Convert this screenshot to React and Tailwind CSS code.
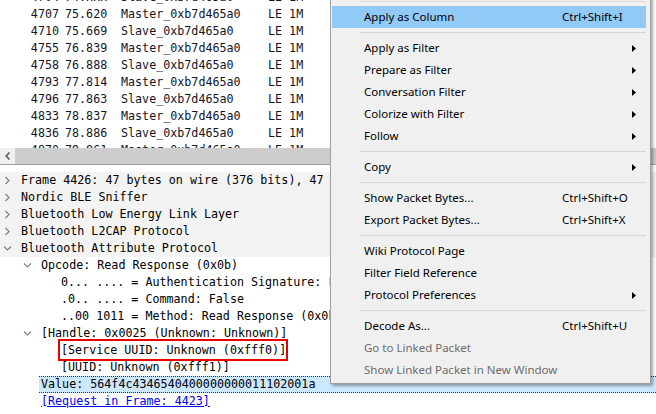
import React from 'react';

const packets = [
  ['4704', '74.xxx', 'Slave_0xb7d465a0'],
  ['4707', '75.620', 'Master_0xb7d465a0'],
  ['4710', '75.669', 'Slave_0xb7d465a0'],
  ['4755', '76.839', 'Master_0xb7d465a0'],
  ['4758', '76.888', 'Slave_0xb7d465a0'],
  ['4793', '77.814', 'Master_0xb7d465a0'],
  ['4796', '77.863', 'Slave_0xb7d465a0'],
  ['4833', '78.837', 'Master_0xb7d465a0'],
  ['4836', '78.886', 'Slave_0xb7d465a0'],
  ['4870', '79.861', 'Master_0xb7d465a0'],
];

const menu = [
  { sep: true },
  { label: 'Apply as Column', sc: 'Ctrl+Shift+I', hl: true },
  { sep: true },
  { label: 'Apply as Filter', sub: true },
  { label: 'Prepare as Filter', sub: true },
  { label: 'Conversation Filter', sub: true },
  { label: 'Colorize with Filter', sub: true },
  { label: 'Follow', sub: true },
  { sep: true },
  { label: 'Copy', sub: true },
  { sep: true },
  { label: 'Show Packet Bytes...', sc: 'Ctrl+Shift+O' },
  { label: 'Export Packet Bytes...', sc: 'Ctrl+Shift+X' },
  { sep: true },
  { label: 'Wiki Protocol Page' },
  { label: 'Filter Field Reference' },
  { label: 'Protocol Preferences', sub: true },
  { sep: true },
  { label: 'Decode As...', sc: 'Ctrl+Shift+U' },
  { label: 'Go to Linked Packet', off: true },
  { label: 'Show Linked Packet in New Window', off: true },
];

// tree expander chevron
const Arrow = ({ open }) => (
  <svg width="9" height="9" viewBox="0 0 9 9" className="block">
    {open ? (
      <polyline points="1,2.5 4.5,6 8,2.5" fill="none" stroke="#808080" strokeWidth="1.2" />
    ) : (
      <polyline points="2.5,1 6,4.5 2.5,8" fill="none" stroke="#808080" strokeWidth="1.2" />
    )}
  </svg>
);

const TreeRow = ({ level, arrow, children, top }) => (
  <div className={`h-[17px] flex items-center whitespace-nowrap ${top ? 'bg-[#f3f3f3]' : ''}`}>
    <div style={{ width: level * 20 }} className="shrink-0" />
    <div className="w-[21px] shrink-0 pl-[3px]">{arrow && <Arrow open={arrow === 'open'} />}</div>
    {children}
  </div>
);

export default function App() {
  return (
    <div className="relative w-[656px] h-[414px] overflow-hidden bg-white text-[11.7px] text-black font-['DejaVu_Sans_Mono',monospace]">
      {/* Packet list */}
      <div className="h-[148px] overflow-hidden">
        <div className="-mt-[11px]">
          {packets.map(([no, time, src]) => (
            <div key={no} className="h-[17px] flex items-center whitespace-nowrap text-[#15151f]">
              <span className="w-[59px] text-right shrink-0">{no}</span>
              <span className="w-[56px] ml-[6px] shrink-0">{time}</span>
              <span className="w-[147px] shrink-0">{src}</span>
              <span>LE 1M</span>
            </div>
          ))}
        </div>
      </div>

      {/* Horizontal scrollbar */}
      <div className="h-[16px] flex">
        <div className="w-[15px] bg-[#f0f0f0] flex items-center justify-center">
          <svg width="6" height="8" viewBox="0 0 6 8">
            <polyline points="4.5,0.5 1.2,4 4.5,7.5" fill="none" stroke="#606060" strokeWidth="1.6" />
          </svg>
        </div>
        <div className="flex-1 bg-[#cdcdcd]" />
      </div>
      <div className="h-px bg-[#a0a0a0]" />

      {/* Packet details */}
      <div className="pt-[7px]">
        <TreeRow level={0} arrow="closed" top>Frame 4426: 47 bytes on wire (376 bits), 47 bytes captured (376 bits) on interface 0</TreeRow>
        <TreeRow level={0} arrow="closed" top>Nordic BLE Sniffer</TreeRow>
        <TreeRow level={0} arrow="closed" top>Bluetooth Low Energy Link Layer</TreeRow>
        <TreeRow level={0} arrow="closed" top>Bluetooth L2CAP Protocol</TreeRow>
        <TreeRow level={0} arrow="open" top>Bluetooth Attribute Protocol</TreeRow>
        <TreeRow level={1} arrow="open">Opcode: Read Response (0x0b)</TreeRow>
        <TreeRow level={2}>0... .... = Authentication Signature: False</TreeRow>
        <TreeRow level={2}>.0.. .... = Command: False</TreeRow>
        <TreeRow level={2}>..00 1011 = Method: Read Response (0x0b)</TreeRow>
        <TreeRow level={1} arrow="open">[Handle: 0x0025 (Unknown: Unknown)]</TreeRow>
        <TreeRow level={2}>
          <span className="relative">
            [Service UUID: Unknown (0xfff0)]
            <span className="absolute left-[-3px] right-[-2px] top-[-3px] bottom-[-2px] border-2 border-[#e80000]" />
          </span>
        </TreeRow>
        <TreeRow level={2}>[UUID: Unknown (0xfff1)]</TreeRow>
        <div className="h-[17px] flex whitespace-nowrap">
          <div className="w-[39px] shrink-0" />
          <div className="flex-1 flex items-center pl-[2px] bg-[#cce8ff] border-y border-dotted border-[#333]">
            Value: 564f4c4346540400000000011102001a
          </div>
        </div>
        <TreeRow level={1}>
          <span className="text-[#0000ee] underline">[Request in Frame: 4423]</span>
        </TreeRow>
      </div>

      {/* Context menu */}
      <div className="absolute left-[330px] top-[-6px] w-[321px] bg-[#f0f0f0] border border-[#a0a0a0] pt-[2px] pb-[2px] pl-px pr-[4px] shadow-[2px_2px_3px_rgba(0,0,0,0.35)] font-['Noto_Sans',sans-serif] text-[11.5px]">
        {menu.map((m, i) =>
          m.sep ? (
            <div key={i} className="h-[9px] flex items-center pl-[28px]">
              <div className="h-px w-full bg-[#d7d7d7]" />
            </div>
          ) : (
            <div
              key={i}
              className={`h-[22px] flex items-center whitespace-nowrap ${m.hl ? 'bg-[#91c9f7]' : ''} ${m.off ? 'text-[#6d6d6d]' : 'text-black'}`}
            >
              <span className="w-[230px] pl-[32px] shrink-0">{m.label}</span>
              <span className="w-[70px] shrink-0">{m.sc}</span>
              {m.sub && (
                <svg width="4" height="7" viewBox="0 0 4 7">
                  <polygon points="0,0 4,3.5 0,7" fill="#000" />
                </svg>
              )}
            </div>
          )
        )}
      </div>
    </div>
  );
}
